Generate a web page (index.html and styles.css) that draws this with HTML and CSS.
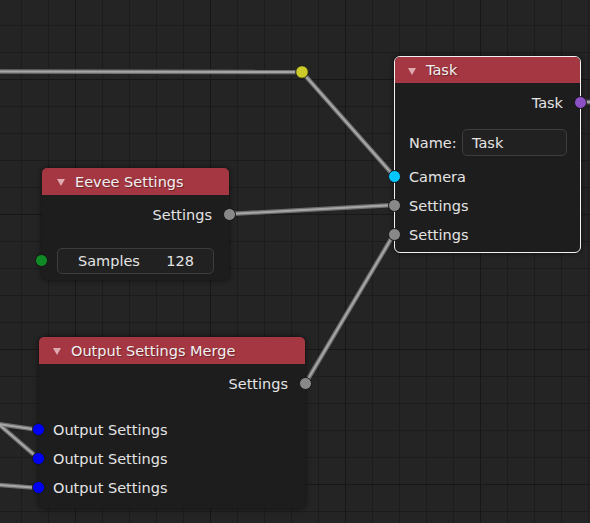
FILE: index.html
```html
<!DOCTYPE html>
<html>
<head>
<meta charset="utf-8">
<link rel="stylesheet" href="styles.css">
</head>
<body>
<div class="canvas">
  <svg class="links" width="590" height="523" viewBox="0 0 590 523">
    <g class="wire-outer">
      <line x1="-5" y1="71.5" x2="302" y2="72"/>
      <line x1="302" y1="72" x2="394" y2="176"/>
      <line x1="229" y1="214" x2="394" y2="205"/>
      <line x1="305" y1="384" x2="394" y2="234"/>
      <line x1="-5" y1="423.5" x2="39" y2="430"/>
      <line x1="-5" y1="421" x2="39" y2="459"/>
      <line x1="-5" y1="484.5" x2="39" y2="488"/>
      <line x1="580" y1="102" x2="600" y2="102"/>
    </g>
    <g class="wire-inner">
      <line x1="-5" y1="71.5" x2="302" y2="72"/>
      <line x1="302" y1="72" x2="394" y2="176"/>
      <line x1="229" y1="214" x2="394" y2="205"/>
      <line x1="305" y1="384" x2="394" y2="234"/>
      <line x1="-5" y1="423.5" x2="39" y2="430"/>
      <line x1="-5" y1="421" x2="39" y2="459"/>
      <line x1="-5" y1="484.5" x2="39" y2="488"/>
      <line x1="580" y1="102" x2="600" y2="102"/>
    </g>
    <circle class="reroute" cx="302" cy="72" r="6.3"/>
  </svg>

  <div class="node node-task">
    <div class="node-header">
      <svg class="tri" width="8" height="7" viewBox="0 0 8 7"><polygon points="0,0 8,0 4,7"/></svg>
      <span>Task</span>
    </div>
    <div class="node-body">
      <div class="row out"><span>Task</span><i class="socket s-purple"></i></div>
      <div class="row prop name-row"><span>Name:</span><div class="field name-field">Task</div></div>
      <div class="row in cam-row"><i class="socket s-cyan"></i><span>Camera</span></div>
      <div class="row in"><i class="socket s-grey"></i><span>Settings</span></div>
      <div class="row in"><i class="socket s-grey"></i><span>Settings</span></div>
    </div>
  </div>

  <div class="node node-eevee">
    <div class="node-header">
      <svg class="tri" width="8" height="7" viewBox="0 0 8 7"><polygon points="0,0 8,0 4,7"/></svg>
      <span>Eevee Settings</span>
    </div>
    <div class="node-body">
      <div class="row out"><span>Settings</span><i class="socket s-grey"></i></div>
      <div class="row field-row gap-row"><i class="socket s-green"></i><div class="field num-field"><span>Samples</span><span>128</span></div></div>
    </div>
  </div>

  <div class="node node-merge">
    <div class="node-header">
      <svg class="tri" width="8" height="7" viewBox="0 0 8 7"><polygon points="0,0 8,0 4,7"/></svg>
      <span>Output Settings Merge</span>
    </div>
    <div class="node-body">
      <div class="row out"><span>Settings</span><i class="socket s-grey"></i></div>
      <div class="row in gap-row"><i class="socket s-blue"></i><span>Output Settings</span></div>
      <div class="row in"><i class="socket s-blue"></i><span>Output Settings</span></div>
      <div class="row in"><i class="socket s-blue"></i><span>Output Settings</span></div>
    </div>
  </div>
</div>
</body>
</html>
```

FILE: styles.css
```css
html, body {
  margin: 0;
  padding: 0;
  background: #242424;
}

.canvas {
  position: relative;
  width: 590px;
  height: 523px;
  overflow: hidden;
  font-family: "DejaVu Sans", sans-serif;
  font-size: 14.5px;
  color: #e4e4e4;
  background-color: #242424;
  background-image:
    linear-gradient(to right, #171717 1px, transparent 1px),
    linear-gradient(to bottom, #171717 1px, transparent 1px),
    linear-gradient(to right, #1c1c1c 1px, transparent 1px),
    linear-gradient(to bottom, #1c1c1c 1px, transparent 1px);
  background-size: 135px 135px, 135px 135px, 27px 27px, 27px 27px;
  background-position: 75px 79px, 75px 79px, 21px 25px, 21px 25px;
}

.links {
  position: absolute;
  left: 0;
  top: 0;
}

.wire-outer line {
  stroke: #6e6e6e;
  stroke-width: 4.5;
}

.wire-inner line {
  stroke: #a6a6a6;
  stroke-width: 2;
}

.reroute {
  fill: #cccb2a;
  stroke: #1a1a1a;
  stroke-width: 1;
}

.node {
  position: absolute;
  background: #1d1d1d;
  border-radius: 6px;
  box-shadow: 0 0 5px 1px rgba(0, 0, 0, 0.45);
}

.node-task {
  left: 394px;
  top: 56px;
  width: 185px;
  border: 1px solid #f2f2f2;
}

.node-eevee {
  left: 42px;
  top: 168px;
  width: 187px;
}

.node-merge {
  left: 39px;
  top: 337px;
  width: 266px;
}

.node-header {
  height: 27px;
  background: #a53742;
  border-radius: 5px 5px 0 0;
  display: flex;
  align-items: center;
  gap: 10px;
  padding-left: 15px;
  color: #f0f0f0;
  text-shadow: 1px 1px 1px rgba(0, 0, 0, 0.35);
}

.node-task .node-header {
  height: 26px;
  padding-left: 13px;
}

.node-merge .node-header {
  padding-left: 14px;
}

.tri {
  display: block;
  margin-top: 2px;
}

.tri polygon {
  fill: #dfaab0;
}

.node-body {
  padding: 5px 0 5px;
}

.node-task .node-body {
  padding-bottom: 3px;
}

.node-merge .node-body {
  padding-bottom: 6px;
}

.row {
  position: relative;
  height: 29px;
  display: flex;
  align-items: center;
}

.row.out {
  justify-content: flex-end;
  padding-right: 17px;
}

.row.in {
  padding-left: 14px;
}

.row.prop {
  padding: 0 13px 0 14px;
}

.name-row {
  margin-top: 11px;
}

.cam-row {
  margin-top: 5px;
}

.gap-row {
  margin-top: 17px;
}

.field-row {
  padding: 0 15px;
}

.field {
  box-sizing: border-box;
  background: #212121;
  border: 1px solid #3d3d3d;
  border-radius: 5px;
  display: flex;
  align-items: center;
}

.name-field {
  margin-left: auto;
  width: 105px;
  height: 27px;
  padding-left: 9px;
}

.num-field {
  width: 157px;
  height: 26px;
  justify-content: space-between;
  padding: 0 19px 0 20px;
}

.socket {
  position: absolute;
  top: 50%;
  width: 13px;
  height: 13px;
  box-sizing: border-box;
  border-radius: 50%;
  border: 1px solid #161616;
  margin-top: -6.5px;
}

.row.out .socket {
  right: -7px;
}

.row.in .socket,
.field-row .socket {
  left: -7px;
}

.s-grey { background: #888888; }
.s-purple { background: #8a50c4; }
.s-cyan { background: #00c6ff; }
.s-green { background: #0f8a25; }
.s-blue { background: #0000f5; }
```
